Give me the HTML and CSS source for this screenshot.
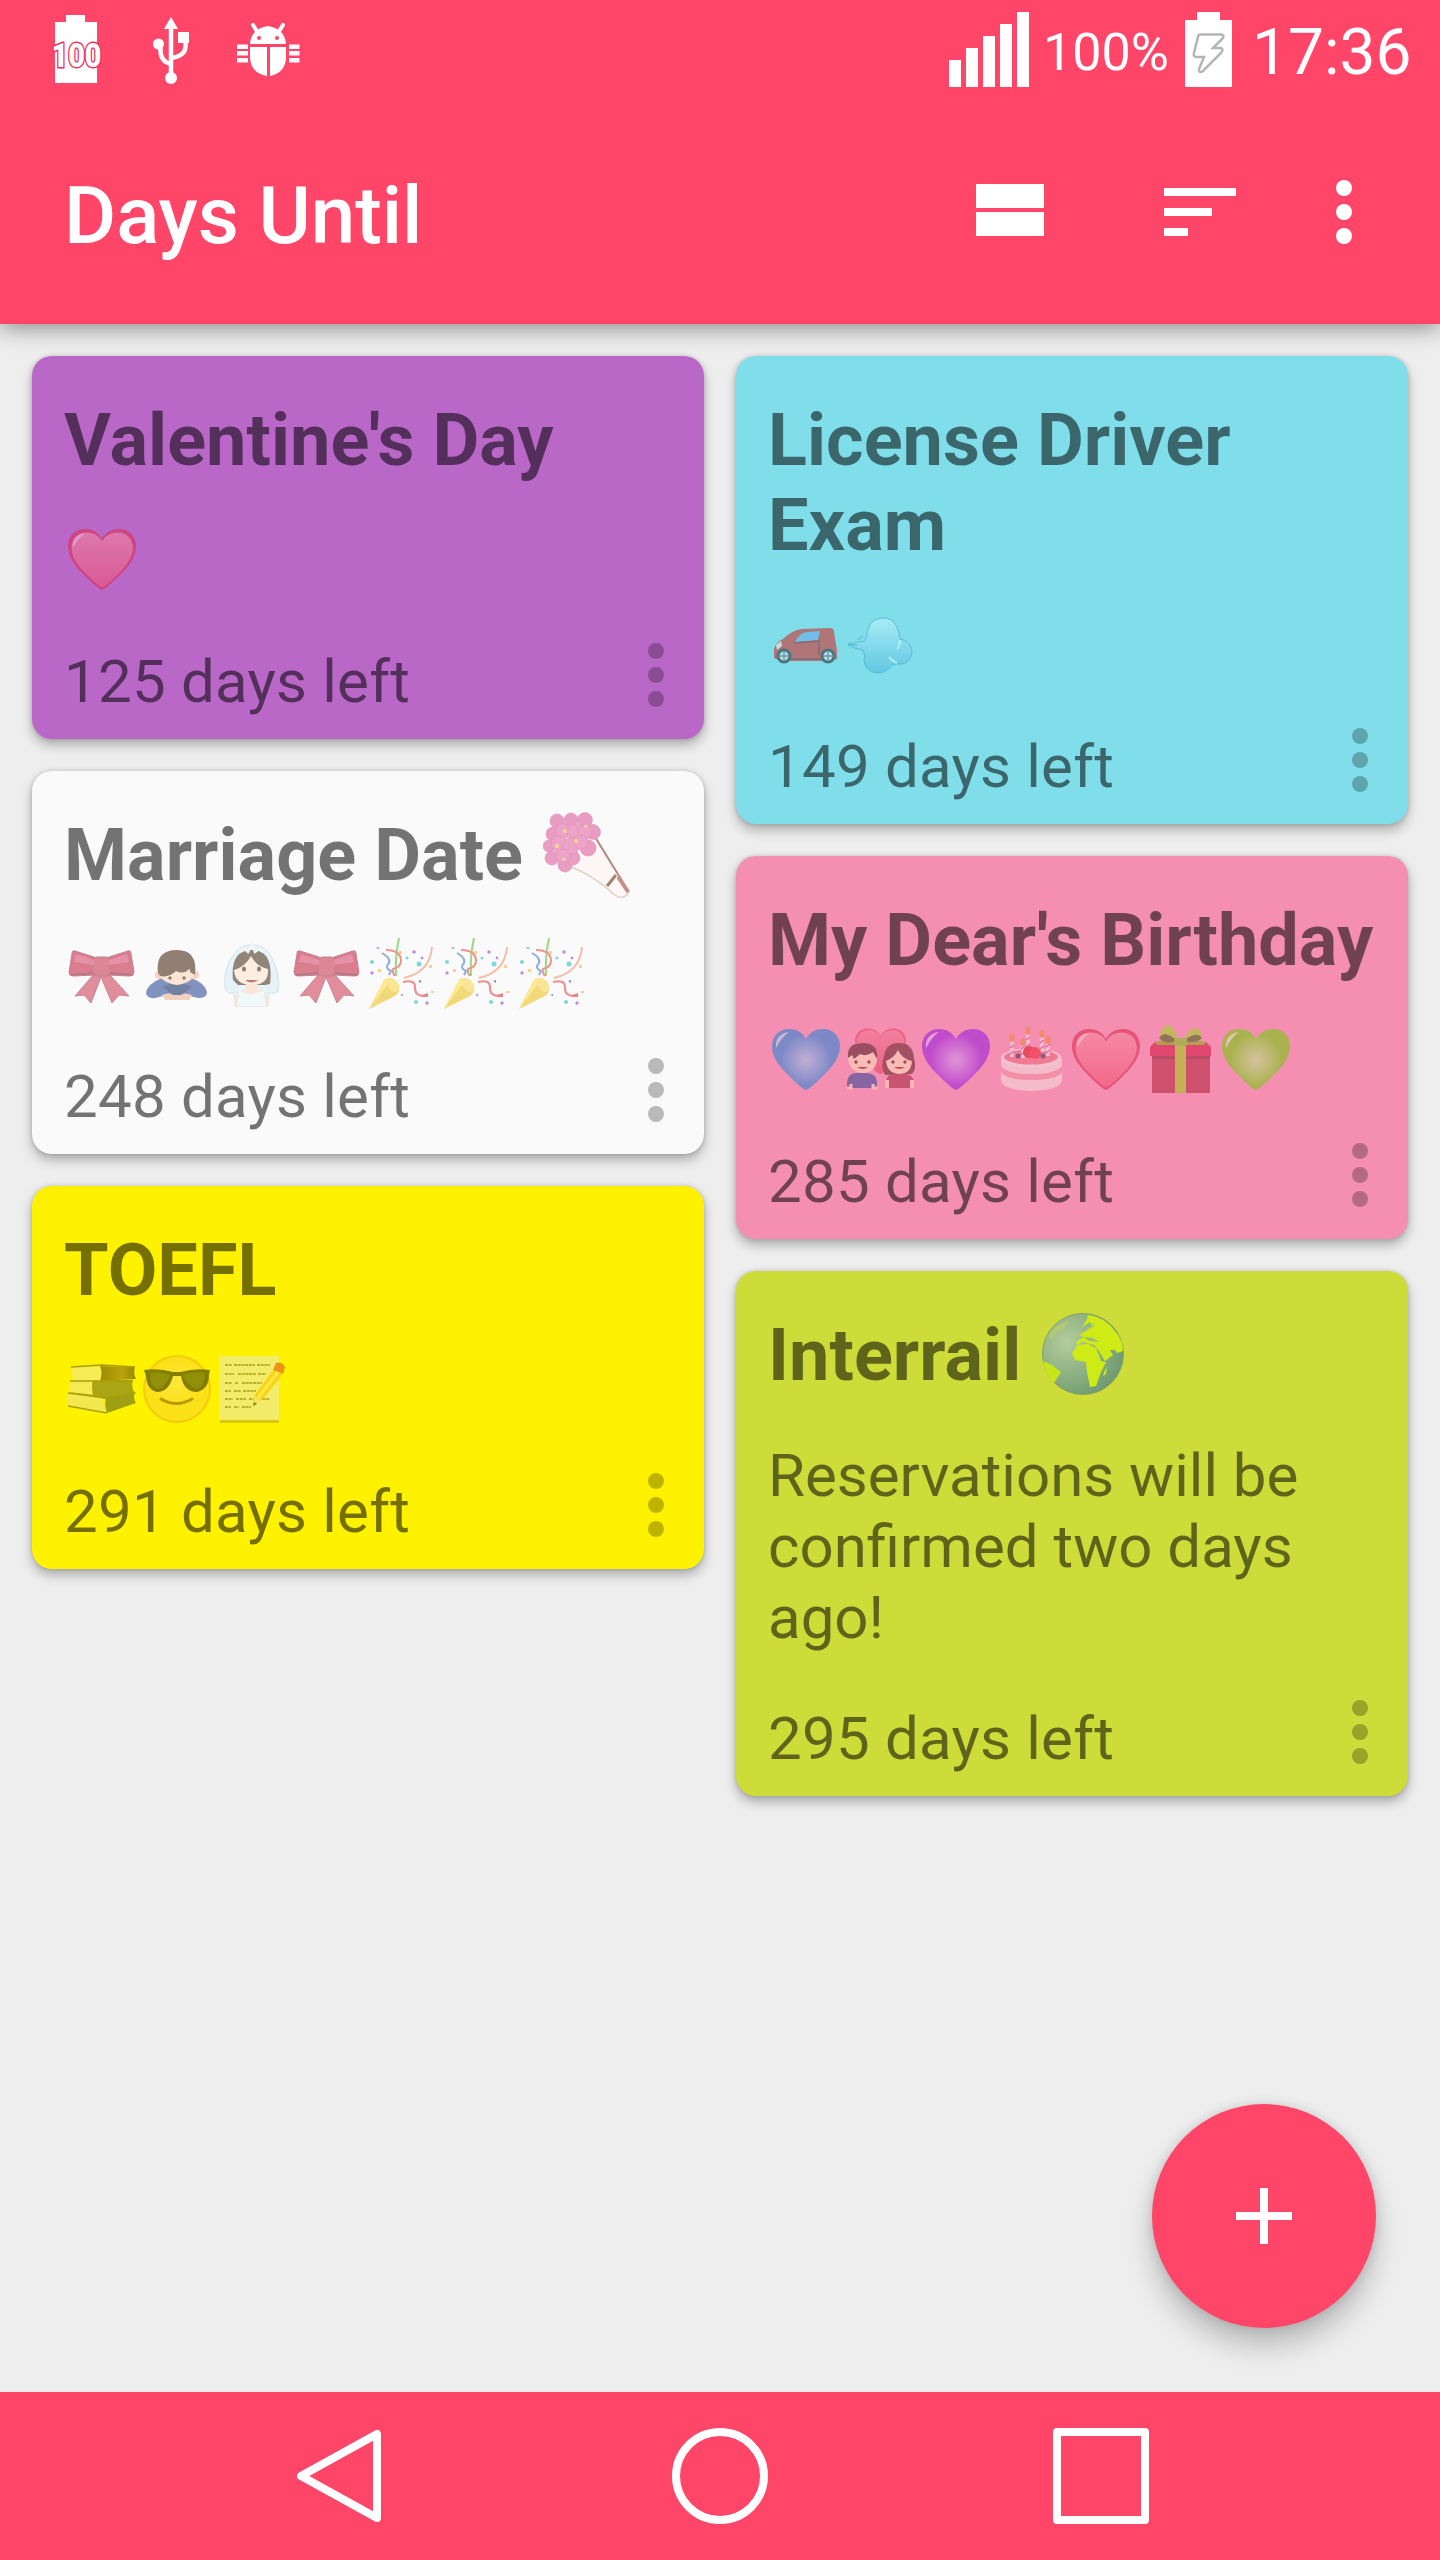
FILE: index.html
```html
<!DOCTYPE html>
<html lang="en">
<head>
  <meta charset="UTF-8" />
  <meta name="viewport" content="width=device-width, initial-scale=1.0"/>
  <title>Days Until</title>
  <link rel="stylesheet" href="styles.css">
</head>
<body>
  <!-- Shared emoji drawings -->
  <svg class="sprite" width="0" height="0">
    <defs>
      <linearGradient id="shine" x1="0" y1="0" x2="0" y2="1">
        <stop offset="0" stop-color="#fff" stop-opacity=".3"/>
        <stop offset="1" stop-color="#fff" stop-opacity="0"/>
      </linearGradient>
      <radialGradient id="glow">
        <stop offset="0" stop-color="#fff" stop-opacity=".55"/>
        <stop offset="1" stop-color="#fff" stop-opacity="0"/>
      </radialGradient>
      <linearGradient id="cloud" x1="0" y1="0" x2="0" y2="1">
        <stop offset="0" stop-color="#c4f6ff"/>
        <stop offset="1" stop-color="#4cb8dd"/>
      </linearGradient>
      <linearGradient id="leather" x1="0" x2="1">
        <stop offset="0" stop-color="#574400"/>
        <stop offset=".6" stop-color="#8a6a18"/>
        <stop offset="1" stop-color="#4e4000"/>
      </linearGradient>
      <radialGradient id="sea" cx=".3" cy=".35" r=".75">
        <stop offset="0" stop-color="#a5c3dc"/>
        <stop offset="1" stop-color="#2f6f96"/>
      </radialGradient>
      <path id="heart-shape" d="M38 67C35 66 28 60 21 53C11 43 4 34 4 23C4 13 11 6 21 6C29 6 35 10 38 16C41 10 47 6 55 6C65 6 72 13 72 23C72 34 65 43 55 53C48 60 41 66 38 67Z"/>
    </defs>

    <symbol id="heart" viewBox="0 0 75 75">
      <use href="#heart-shape" fill="#dc2c50"/>
      <use href="#heart-shape" fill="#f2506f" transform="translate(4 4) scale(.9)"/>
      <use href="#heart-shape" fill="url(#shine)" transform="translate(4 4) scale(.9)"/>
      <path d="M9 25C8 16 13 11 21 10C16 14 13 18 9 25Z" fill="#fff" opacity=".5"/>
    </symbol>
    <symbol id="heart-glow" viewBox="0 0 75 75">
      <use href="#heart-shape" fill="currentColor"/>
      <circle cx="38" cy="37" r="26" fill="url(#glow)"/>
      <path d="M8 25C7 16 12 10 21 9C15 13 12 18 8 25Z" fill="#fff" opacity=".65"/>
    </symbol>

    <symbol id="car" viewBox="0 0 75 75">
      <path d="M6 50V41Q8 34 15 31Q24 22 34 21L62 20Q66 20 66 24L69 43V51L62 53H13Z" fill="#d22a25"/>
      <path d="M27 34Q31 25 39 24L52 23L50 32Z" fill="#69a8e8"/>
      <path d="M26 35L51 33V47M20 51H57" stroke="#871b24" stroke-width="1.5" fill="none"/>
      <path d="M8 37L13 33L14 38L9 42Z" fill="#f6dddd"/>
      <g fill="#d9e3e8" stroke="#252c36" stroke-width="3">
        <circle cx="16" cy="48" r="6"/><circle cx="60" cy="48" r="6"/>
      </g>
      <path d="M16 43V53M11 48H21M60 43V53M55 48H65" stroke="#5d656d" stroke-width="1.4"/>
    </symbol>
    <symbol id="dash" viewBox="0 0 75 75">
      <path d="M5 36L21 33Q22 31 24 28C24 16 31 10 41 10C51 10 56 20 57 31C64 32 69 38 69 44C68 52 63 57 54 56C48 55 47 65 34 65C24 64 19 56 22 48L20 42Q12 41 5 37L14 37Z" fill="url(#cloud)" stroke="#3ba6c7" stroke-width="1"/>
      <path d="M9 31Q16 33 20 26Q20 34 9 31Z" fill="#4cb3d0"/>
      <path d="M57 32Q57 38 54 41M54 55Q48 52 46 49" stroke="#dcfaff" stroke-width="2" fill="none"/>
    </symbol>

    <symbol id="ribbon" viewBox="0 0 75 75">
      <path d="M30 36L11 58L20 57L27 65L37 39L48 65L55 57L65 58L45 36Z" fill="#d03f58" stroke="#a8354a" stroke-width="1"/>
      <path d="M30 19L11 13Q8 12 8 16L5 34Q5 38 9 38L31 37ZM45 19L64 13Q67 12 67 16L70 34Q70 38 66 38L44 37Z" fill="#c42443" stroke="#9d2840" stroke-width="1"/>
      <path d="M7 37L29 35M68 37L46 35" stroke="#7a1a2e" stroke-width="1.6"/>
      <rect x="29" y="19" width="17" height="19" rx="4" fill="#c8344f" stroke="#9d2840"/>
      <path d="M12 16L30 22V27L10 24ZM63 16L45 22V27L65 24Z" fill="#e86a98" opacity=".5"/>
    </symbol>
    <symbol id="bow-man" viewBox="0 0 75 75">
      <path d="M23 40Q8 46 7 55Q8 61 16 60L24 58L38 62L51 58L59 60Q68 60 68 54Q66 45 52 40Z" fill="#2d4896"/>
      <path d="M23 57Q29 54 38 57Q46 54 53 57L50 62H26Z" fill="#edb39a"/>
      <path d="M23 49L30 46H46L53 49L42 57H34Z" fill="#122a62"/>
      <circle cx="20" cy="37" r="4" fill="#f4b7a0"/><circle cx="56" cy="37" r="4" fill="#f4b7a0"/>
      <path d="M19 33Q20 44 38 47Q56 44 56 33Z" fill="#fdd9b8"/>
      <path d="M19 35Q16 12 38 12Q59 12 56 37L51 34V31Q44 37 37 33Q30 40 21 38Z" fill="#452711"/>
      <circle cx="31" cy="40" r="1.7" fill="#47200d"/><circle cx="45" cy="40" r="1.7" fill="#47200d"/>
    </symbol>
    <symbol id="bride" viewBox="0 0 75 75">
      <path d="M20 16C28 4 46 4 55 15C63 27 66 43 64 53Q60 57 55 54L54 68H21L20 54Q14 57 11 51C10 37 12 26 20 16Z" fill="#d8eef8" stroke="#b3d6e8" stroke-width="1"/>
      <path d="M19 42Q16 12 38 12Q60 12 56 46L51 47H24Z" fill="#47301e"/>
      <path d="M20 32Q31 29 37 18Q43 29 54 31Q55 47 38 47Q21 47 20 32Z" fill="#fde4cf"/>
      <path d="M32 46H43V52Q56 52 55 67H20Q19 52 32 52Z" fill="#fbd9c2"/>
      <path d="M25 54Q31 53 37 57Q44 53 50 54L52 68H23Z" fill="#eaf8fb"/>
      <path d="M26 14L31 11L34 14L38 6L41 14L45 11L49 14" fill="none" stroke="#eef4f6" stroke-width="2.5"/>
      <ellipse cx="30" cy="31" rx="2" ry="2.5" fill="#422011"/><ellipse cx="45" cy="31" rx="2" ry="2.5" fill="#422011"/>
      <path d="M31 42H44Q38 47 31 42Z" fill="#95211c"/>
    </symbol>
    <symbol id="party" viewBox="0 0 75 75">
      <path d="M5 71L20 42Q23 39 29 41Q37 45 35 53Q34 56 31 58Z" fill="#ecc01d"/>
      <path d="M5 71L20 42Q22 39 26 43Q18 54 5 71Z" fill="#ffe04a"/>
      <ellipse cx="29" cy="47" rx="5" ry="8" transform="rotate(-35 29 47)" fill="#f8d94f"/>
      <g fill="none" stroke-width="2">
        <path d="M32 38Q31 18 35 0" stroke="#53c42d"/>
        <path d="M40 40Q66 34 68 9" stroke="#f4906a"/>
        <path d="M22 12Q37 12 37 23Q37 29 29 31Q28 34 31 38" stroke="#e34b40"/>
        <path d="M18 15Q27 20 25 25Q20 30 27 33L25 37" stroke="#3a78c8"/>
        <path d="M39 44Q51 41 51 49Q50 58 61 58" stroke="#e64343"/>
      </g>
      <g fill="#26bfc2">
        <circle cx="8" cy="24" r="2"/><circle cx="55" cy="26" r="2.5"/><circle cx="52" cy="64" r="2"/><circle cx="43" cy="20" r="1.5"/>
      </g>
      <g fill="#a53fc3">
        <circle cx="50" cy="14" r="1.8"/><circle cx="8" cy="35" r="1.7"/><circle cx="58" cy="20" r="1.4"/><circle cx="63" cy="65" r="1.7"/>
      </g>
      <path d="M12 9l4 1-2 1zM54 43l3-1v3zM36 57l3-1v2z" fill="#243c83"/>
      <path d="M14 31h3v3h-3zM65 27h3v3h-3zM67 53h3v2h-3zM35 13h3v3h-3z" fill="#ffb13d"/>
      <path d="M58 57L64 55V59L58 59Z" fill="#d8303e"/>
    </symbol>

    <symbol id="couple" viewBox="0 0 75 75">
      <use href="#heart-shape" fill="#ea4063" transform="translate(9 1) scale(.75)"/>
      <use href="#heart-shape" fill="url(#shine)" transform="translate(11 3) scale(.7)"/>
      <path d="M4 65V59Q5 50 14 50H24Q34 51 34 59V65Z" fill="#384798"/>
      <path d="M4 65H8V61M34 65H30V61" fill="none" stroke="#ffd3b3" stroke-width="3"/>
      <path d="M5 36Q3 20 20 20Q36 20 34 37Q32 50 20 50Q7 49 5 36Z" fill="#ffdbb9"/>
      <path d="M5 35Q3 20 20 20Q36 20 34 36L30 29Q24 34 17 31L11 36L9 32Z" fill="#5a2027"/>
      <path d="M42 52Q37 44 41 33Q43 20 56 20Q70 20 71 35Q74 46 69 51Z" fill="#6a242b"/>
      <path d="M43 65V57Q45 51 51 51H61Q69 51 71 58V65Z" fill="#a82a43"/>
      <path d="M44 65V57M69 65V57" stroke="#ffd3b3" stroke-width="4"/>
      <path d="M43 38Q51 35 55 27Q59 36 69 38Q68 51 56 51Q44 50 43 38Z" fill="#ffdbb9"/>
      <g fill="#512026"><circle cx="13" cy="39" r="1.7"/><circle cx="26" cy="39" r="1.7"/><circle cx="50" cy="39" r="1.7"/><circle cx="62" cy="39" r="1.7"/></g>
      <path d="M14 44H25Q20 48 14 44ZM51 44H62Q56 48 51 44Z" fill="#9f1f30"/>
    </symbol>
    <symbol id="cake" viewBox="0 0 75 75">
      <path d="M8 35V57Q9 67 38 68Q68 67 69 57V35Z" fill="#f5dedf"/>
      <path d="M8 43Q14 51 38 51Q63 51 69 43V49Q64 57 38 57Q13 57 8 49Z" fill="#f38fa0"/>
      <ellipse cx="38" cy="35" rx="30.5" ry="10" fill="#f6e4e6"/>
      <ellipse cx="38" cy="34" rx="27" ry="7.5" fill="#ee6c7d"/>
      <path d="M19 34V17M30 35V21M35 29V11M49 29V14M55 33V19" stroke="#f9e3ef" stroke-width="3.5"/>
      <path d="M17 31l4-3M17 25l4-3M28 32l4-3M28 26l4-3M33 24l4-3M33 17l4-3M47 26l4-3M47 20l4-3M53 30l4-3M53 24l4-3" stroke="#dc4d8b" stroke-width="1.5"/>
      <g fill="#f18536"><ellipse cx="19" cy="15" rx="2.5" ry="4"/><ellipse cx="30" cy="19" rx="2.5" ry="4"/><ellipse cx="35" cy="8" rx="2.5" ry="4"/><ellipse cx="49" cy="11" rx="2.5" ry="4"/><ellipse cx="55" cy="17" rx="2.5" ry="4"/></g>
      <circle cx="36" cy="29" r="6" fill="#dd1a2c"/><circle cx="42" cy="30" r="6" fill="#f22532"/>
      <circle cx="25" cy="33" r="2.5" fill="#373864"/><circle cx="50" cy="33" r="2.5" fill="#373864"/>
    </symbol>
    <symbol id="gift" viewBox="0 0 75 75">
      <path d="M9 30H67V70H9Z" fill="#b5243d"/>
      <path d="M12 19H63L68 24V33H7V24Z" fill="#d4143f"/>
      <path d="M9 33H67V36H9Z" fill="#8c1c32"/>
      <path d="M32 19H43V70H32Z" fill="#a2c818"/>
      <path d="M12 19L32 15H43L63 19L61 22H14Z" fill="#86a810"/>
      <path d="M35 18Q31 2 24 2Q19 3 16 15L26 12Q31 14 35 18ZM40 18Q46 5 53 5Q58 6 59 15L51 12Q46 14 40 18Z" fill="#9ad51a"/>
      <path d="M16 15Q22 6 34 18Q22 22 16 15ZM59 15Q53 7 41 18Q53 21 59 15Z" fill="#4c5f18"/>
      <rect x="31" y="15" width="13" height="8" rx="2" fill="#80c014"/>
    </symbol>

    <symbol id="books" viewBox="0 0 75 75">
      <path d="M4 40L39 45L42 60L4 53Z" fill="#ebe18b"/>
      <path d="M42 45L72 39Q68 44 72 50L43 60Q40 52 42 45Z" fill="#5a6420"/>
      <path d="M4 39L35 37L72 39L42 46Z" fill="#6e7120"/>
      <path d="M6 28L30 27V42L5 39Z" fill="#efe58e"/>
      <path d="M29 27H69Q67 33 70 39L29 42Q27 34 29 27Z" fill="#6e7022"/>
      <path d="M7 14L38 14V28L9 27Z" fill="#f1e994"/>
      <path d="M36 13L71 14Q69 20 72 26L36 28Q39 20 36 13Z" fill="url(#leather)"/>
      <path d="M7 14L38 12L71 14M6 28H69M4 40L42 45L70 40M4 53L43 60" fill="none" stroke="#716311" stroke-width="1.5"/>
    </symbol>
    <symbol id="cool" viewBox="0 0 75 75">
      <circle cx="38" cy="36" r="34" fill="#efae1b"/>
      <circle cx="38" cy="36" r="32" fill="#fbd42a"/>
      <circle cx="38" cy="30" r="24" fill="url(#glow)" opacity=".5"/>
      <path d="M5 17Q20 15 34 19H41Q57 15 71 17L70 22Q70 36 58 39Q45 39 42 23H34Q30 39 18 39Q8 37 7 23Z" fill="#292c05"/>
      <path d="M11 20Q22 18 31 22Q27 35 18 36Q10 32 11 20ZM44 22Q54 18 66 20Q65 34 58 36Q48 33 44 22Z" fill="#45480f"/>
      <path d="M22 46Q37 55 53 46" stroke="#865c06" stroke-width="3" stroke-linecap="round" fill="none"/>
    </symbol>
    <symbol id="memo" viewBox="0 0 75 75">
      <path d="M6 4H65V70H6Z" fill="#bda81a"/>
      <path d="M5 3H65V67H5Z" fill="#ebe9b8"/>
      <path d="M11 12h7m2 0h21m2 0h13M11 21h9m4 0h18m2 0h8M11 30h7m3 0h3m4 0h20M11 38h6m3 0h7m2 0h13M11 46h8m3 0h10m3 0h9m4 0h8M11 54h6m3 0h5m3 0h9" stroke="#686321" stroke-width="1.6" stroke-dasharray="3 .7"/>
      <path d="M59 17L69 21L48 47L39 53L40 43Z" fill="#f6bf24"/>
      <path d="M59 17L62 10Q68 8 71 14L69 21Z" fill="#df4f22"/>
      <path d="M40 43L39 53L48 47Z" fill="#efd6a0"/>
      <path d="M39 53L40 49L43 51Z" fill="#343218"/>
      <path d="M64 19L44 45" stroke="#fbe27a" stroke-width="3"/>
    </symbol>

    <symbol id="bouquet" viewBox="0 0 88 88">
      <path d="M25 54Q47 61 72 83Q82 90 86 79L52 25Z" fill="#fff8f3"/>
      <path d="M52 25L86 80" stroke="#8c3a2b" stroke-width="2"/>
      <path d="M25 54Q47 61 72 83Q80 89 86 80" fill="none" stroke="#d3b8a0" stroke-width="1.5"/>
      <path d="M73 63L64 74" stroke="#6a3914" stroke-width="3"/>
      <path d="M75 65L85 80" stroke="#a34b3a" stroke-width="3.5"/>
      <g fill="#e0609f" stroke="#cf4b8d" stroke-width=".6">
        <circle cx="14" cy="9" r="7"/><circle cx="28" cy="8" r="7"/><circle cx="42" cy="8" r="7.5"/>
        <circle cx="10" cy="22" r="7"/><circle cx="50" cy="20" r="7.5"/><circle cx="6" cy="34" r="6"/>
        <circle cx="9" cy="46" r="7"/><circle cx="22" cy="53" r="7"/><circle cx="30" cy="46" r="7"/>
        <circle cx="45" cy="36" r="8"/>
      </g>
      <g fill="#e56aa6" stroke="#cd4a8b" stroke-width=".6">
        <circle cx="20" cy="19" r="7.5"/><circle cx="32" cy="20" r="8"/><circle cx="42" cy="20" r="7"/>
        <circle cx="16" cy="32" r="8"/><circle cx="28" cy="34" r="8.5"/><circle cx="38" cy="30" r="7"/><circle cx="20" cy="44" r="7"/>
      </g>
      <g fill="#f8c34c"><circle cx="22" cy="19" r="2"/><circle cx="14" cy="34" r="2"/><circle cx="33" cy="29" r="2"/><circle cx="43" cy="14" r="1.5"/><circle cx="21" cy="47" r="1.5"/></g>
    </symbol>
    <symbol id="globe" viewBox="0 0 88 88">
      <circle cx="42" cy="42" r="40.5" fill="url(#sea)" stroke="#4d7c80" stroke-width="1"/>
      <path d="M47 3Q64 5 74 19Q82 28 82 39L76 41L74 38L69 38L72 43L64 49L58 39L53 33L42 30L35 33L36 29L43 25L38 23L45 19L51 14L49 10L41 15L46 7Z" fill="#d0f500"/>
      <path d="M37 33L47 32L55 36L60 49L65 50L60 60L55 74L49 75L46 60L45 50L34 48L31 41Z" fill="#d0f500"/>
      <path d="M2 49L11 53L20 60L13 71Q4 62 2 49Z" fill="#c4eb08"/>
      <path d="M8 23L15 15L28 8L22 17L14 21L10 27Z" fill="#a6bfa0"/>
      <path d="M43 25L52 26L58 30L48 29ZM47 19L52 15L53 10L49 18Z" fill="#7aa2a6"/>
      <path d="M63 60L66 55L65 62L62 64Z" fill="#d0f500"/>
    </symbol>
    <symbol id="dots" viewBox="0 0 16 64">
      <circle cx="8" cy="8" r="8"/><circle cx="8" cy="32" r="8"/><circle cx="8" cy="56" r="8"/>
    </symbol>
  </svg>

  <div class="screen">
    <header class="top">
      <div class="status-bar">
        <div class="notifications">
          <svg class="battery-level" width="50" height="69" viewBox="0 0 50 69">
            <path d="M4 7H15V0H34V7H46V68H4Z" fill="#fff"/>
            <text class="level-text" x="25.5" y="52" text-anchor="middle" textLength="50" lengthAdjust="spacingAndGlyphs">100</text>
          </svg>
          <svg class="usb" width="36" height="68" viewBox="0 0 36 68">
            <path d="M18 0L25 12H11Z" fill="#fff"/>
            <rect x="25" y="15" width="11" height="11" fill="#fff"/>
            <circle cx="5.5" cy="27" r="5.5" fill="#fff"/><circle cx="18" cy="61" r="6" fill="#fff"/>
            <path d="M18 10V58M7.500 29V34Q8 45 18 47M32.500 24V30Q32 39 18 41" fill="none" stroke="#fff" stroke-width="4.5"/>
          </svg>
          <svg class="bug" width="63" height="54" viewBox="0 0 63 54">
            <path d="M13 21Q14 6 31 3Q48 6 49 21Z" fill="#fff"/>
            <path d="M16 2L21 10M46 2L41 10" stroke="#fff" stroke-width="4" stroke-linecap="round"/>
            <path d="M13 24H30V53Q14 50 13 35ZM33 24H49V35Q48 50 33 53Z" fill="#fff"/>
            <path d="M0 21.5H11V26H0ZM0 28H11V32.5H0ZM0 35H11V39.5H0ZM52 21.5H62.5V26H52ZM52 28H62.5V32.5H52ZM52 35H62.5V39.5H52Z" fill="#fff"/>
            <circle cx="22" cy="15" r="2" fill="#ff4568"/><circle cx="40" cy="15" r="2" fill="#ff4568"/>
          </svg>
        </div>
        <div class="system">
          <svg width="80" height="75" viewBox="0 0 80 75" fill="#fff">
            <path d="M0 48H12V75H0ZM17 36H29V75H17ZM34 24H46V75H34ZM51 12H63V75H51ZM68 0H80V75H68Z"/>
          </svg>
          <span class="percent">100%</span>
          <svg width="47" height="75" viewBox="0 0 47 75">
            <path d="M0 8H12V0H35V8H47V75H0Z" fill="#fff"/>
            <path d="M15 22.5H37Q40 24 37 27L28 36H36Q39 37 36 41L18 59Q14 62 14 57L19 45H11Q8 44 9 41L13 25Q13 23 15 22.5Z" fill="none" stroke="#b5b5b5" stroke-width="2.5"/>
          </svg>
          <span class="clock">17:36</span>
        </div>
      </div>
      <div class="app-bar">
        <h1>Days Until</h1>
        <div class="actions">
          <svg width="68" height="52" viewBox="0 0 68 52" fill="#fff"><path d="M0 0H68V24H0ZM0 28H68V52H0Z"/></svg>
          <svg width="72" height="48" viewBox="0 0 72 48" fill="#fff"><path d="M0 0H72V8H0ZM0 20H48V28H0ZM0 40H24V48H0Z"/></svg>
          <svg width="16" height="64" fill="#fff"><use href="#dots"/></svg>
        </div>
      </div>
    </header>

    <main class="board">
      <div class="column">
        <article class="card purple">
          <h2>Valentine's Day</h2>
          <p class="note emoji-row"><svg class="emoji"><use href="#heart"/></svg></p>
          <div class="card-footer"><span>125 days left</span><svg class="menu"><use href="#dots"/></svg></div>
        </article>
        <article class="card white">
          <h2>Marriage Date <svg class="title-emoji"><use href="#bouquet"/></svg></h2>
          <p class="note emoji-row">
            <svg class="emoji"><use href="#ribbon"/></svg>
            <svg class="emoji"><use href="#bow-man"/></svg>
            <svg class="emoji"><use href="#bride"/></svg>
            <svg class="emoji"><use href="#ribbon"/></svg>
            <svg class="emoji"><use href="#party"/></svg>
            <svg class="emoji"><use href="#party"/></svg>
            <svg class="emoji"><use href="#party"/></svg>
          </p>
          <div class="card-footer"><span>248 days left</span><svg class="menu"><use href="#dots"/></svg></div>
        </article>
        <article class="card yellow">
          <h2>TOEFL</h2>
          <p class="note emoji-row">
            <svg class="emoji"><use href="#books"/></svg>
            <svg class="emoji"><use href="#cool"/></svg>
            <svg class="emoji"><use href="#memo"/></svg>
          </p>
          <div class="card-footer"><span>291 days left</span><svg class="menu"><use href="#dots"/></svg></div>
        </article>
      </div>

      <div class="column">
        <article class="card cyan">
          <h2>License Driver Exam</h2>
          <p class="note emoji-row">
            <svg class="emoji"><use href="#car"/></svg>
            <svg class="emoji"><use href="#dash"/></svg>
          </p>
          <div class="card-footer"><span>149 days left</span><svg class="menu"><use href="#dots"/></svg></div>
        </article>
        <article class="card pink">
          <h2>My Dear's Birthday</h2>
          <p class="note emoji-row">
            <svg class="emoji heart-blue"><use href="#heart-glow"/></svg>
            <svg class="emoji"><use href="#couple"/></svg>
            <svg class="emoji heart-purple"><use href="#heart-glow"/></svg>
            <svg class="emoji"><use href="#cake"/></svg>
            <svg class="emoji"><use href="#heart"/></svg>
            <svg class="emoji"><use href="#gift"/></svg>
            <svg class="emoji heart-green"><use href="#heart-glow"/></svg>
          </p>
          <div class="card-footer"><span>285 days left</span><svg class="menu"><use href="#dots"/></svg></div>
        </article>
        <article class="card lime">
          <h2>Interrail <svg class="title-emoji"><use href="#globe"/></svg></h2>
          <p class="note">Reservations will be confirmed two days ago!</p>
          <div class="card-footer"><span>295 days left</span><svg class="menu"><use href="#dots"/></svg></div>
        </article>
      </div>
    </main>

    <button class="fab" aria-label="Add">
      <svg width="56" height="56" viewBox="0 0 56 56"><path d="M24 0H32V24H56V32H32V56H24V32H0V24H24Z" fill="#fff"/></svg>
    </button>

    <nav class="nav-bar">
      <svg width="84" height="96" viewBox="0 0 84 96"><path d="M80 6V90L4 48Z"/></svg>
      <svg width="96" height="96" viewBox="0 0 96 96"><circle cx="48" cy="48" r="44"/></svg>
      <svg width="96" height="96" viewBox="0 0 96 96"><rect x="4" y="4" width="88" height="88"/></svg>
    </nav>
  </div>
</body>
</html>
```
FILE: styles.css
```css
* {
  margin: 0;
  padding: 0;
  box-sizing: border-box;
}

body {
  font-family: Roboto, "Liberation Sans", sans-serif;
  background: #eee;
}

svg {
  display: block;
  flex: none;
}

.sprite {
  position: absolute;
}

.screen {
  position: relative;
  display: flex;
  flex-direction: column;
  width: 1440px;
  height: 2560px;
  overflow: hidden;
}

/* Top bars */
.top {
  height: 324px;
  background: #ff4568;
  color: #fff;
  box-shadow: 0 4px 22px rgba(0, 0, 0, 0.42);
}

.status-bar {
  display: flex;
  justify-content: space-between;
  height: 100px;
  padding: 12px 28px 0 51px;
}

.notifications,
.system {
  display: flex;
  align-items: flex-start;
}

.battery-level {
  margin-top: 3px;
  overflow: visible;
}

.level-text {
  font-size: 34px;
  font-weight: 900;
  fill: #fff;
  stroke: #e8305a;
  stroke-width: 3px;
  paint-order: stroke;
}

.usb {
  margin: 5px 0 0 52px;
}

.bug {
  margin: 11px 0 0 48px;
}

.percent {
  width: 156px;
  padding: 10px 0 0 14px;
  font-size: 52px;
  line-height: 62px;
}

.clock {
  width: 180px;
  padding: 1px 0 0 20px;
  font-size: 64px;
  line-height: 80px;
}

.app-bar {
  display: flex;
  align-items: center;
  justify-content: space-between;
  height: 224px;
  padding: 0 88px 0 64px;
}

.app-bar h1 {
  padding-top: 7px;
  font-size: 80px;
  font-weight: 500;
  line-height: 94px;
  letter-spacing: -0.1px;
}

.actions {
  display: flex;
  align-items: flex-start;
}

.actions svg:nth-child(1) {
  margin: 4px 120px 0 0;
}

.actions svg:nth-child(2) {
  margin: 8px 100px 0 0;
}

/* Cards */
.board {
  display: grid;
  grid-template-columns: 672px 672px;
  gap: 32px;
  flex: 1;
  padding: 32px;
}

.column {
  display: flex;
  flex-direction: column;
  gap: 32px;
}

.card {
  padding: 42px 32px 22px;
  border-radius: 20px;
  color: rgba(0, 0, 0, 0.54);
  box-shadow: 0 6px 12px rgba(0, 0, 0, 0.28), 0 0 4px rgba(0, 0, 0, 0.16);
}

.card h2 {
  display: flex;
  font-size: 72px;
  font-weight: 700;
  line-height: 85px;
  letter-spacing: 0.05px;
  white-space: pre-wrap;
}

.note {
  margin: 42px 0 50px;
  font-size: 60px;
  line-height: 71px;
}

.emoji-row {
  display: flex;
  height: 71px;
}

.emoji {
  width: 75px;
  height: 75px;
  margin-top: -2px;
  overflow: visible;
  opacity: 0.58;
}

.title-emoji {
  width: 88px;
  height: 88px;
  margin: -1px 0 -2px 2px;
  opacity: 0.6;
}

.card-footer {
  display: flex;
  justify-content: space-between;
  height: 71px;
  font-size: 60px;
  line-height: 71px;
  letter-spacing: 0.22px;
}

.menu {
  width: 16px;
  height: 64px;
  margin: -3px 8px 0 0;
  fill: rgba(0, 0, 0, 0.26);
}

.purple { background: #ba68c8; }
.white { background: #fafafa; }
.yellow { background: #fff200; }
.cyan { background: #80deea; }
.pink { background: #f48fb1; }
.lime { background: #cddc39; }

.heart-blue { color: #2984d8; }
.heart-purple { color: #9c1de0; }
.heart-green { color: #76cc0c; }

/* Floating button */
.fab {
  position: absolute;
  right: 64px;
  bottom: 232px;
  display: flex;
  align-items: center;
  justify-content: center;
  width: 224px;
  height: 224px;
  border: none;
  border-radius: 50%;
  background: #ff4568;
  box-shadow: 0 18px 28px rgba(0, 0, 0, 0.22), 0 0 12px rgba(0, 0, 0, 0.12);
}

/* System navigation */
.nav-bar {
  display: grid;
  grid-template-columns: 84px 1fr 96px;
  align-items: center;
  justify-items: center;
  height: 168px;
  padding: 0 291px 0 297px;
  background: #ff4568;
}

.nav-bar svg {
  fill: none;
  stroke: #fff;
  stroke-width: 8px;
  stroke-linejoin: round;
}

.nav-bar svg:nth-child(2) {
  margin-left: 6px;
}
```
